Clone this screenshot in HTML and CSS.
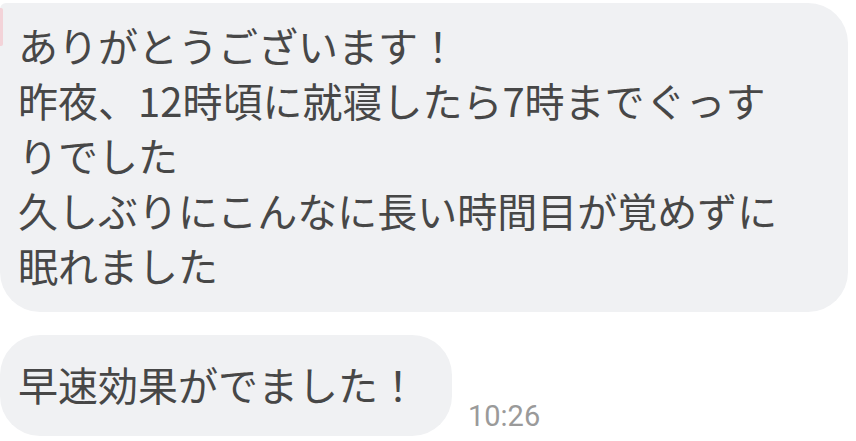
FILE: index.html
```html
<!DOCTYPE html>
<html lang="ja">
<head>
<meta charset="utf-8">
<link rel="stylesheet" href="styles.css">
</head>
<body>
<div class="chat">
  <span class="avatar-edge"></span>
  <div class="bubble bubble-first">ありがとうございます！<br>昨夜、12時頃に就寝したら7時までぐっすりでした<br>久しぶりにこんなに長い時間目が覚めずに眠れました</div>
  <div class="row">
    <div class="bubble bubble-short">早速効果がでました！</div>
    <span class="time">10:26</span>
  </div>
</div>
</body>
</html>
```
FILE: styles.css
```css
html, body {
  margin: 0;
  padding: 0;
  background: #ffffff;
}
.chat {
  position: relative;
  width: 856px;
  height: 441px;
  overflow: hidden;
  padding-top: 3px;
  box-sizing: border-box;
  display: flex;
  flex-direction: column;
  gap: 23px;
  font-family: "Noto Sans CJK JP", "Noto Sans", sans-serif;
}
.avatar-edge {
  position: absolute;
  left: 0;
  top: 8px;
  width: 3px;
  height: 38px;
  background: #f3d3d8;
  border-radius: 0 2px 2px 0;
}
.bubble {
  background: #f0f1f3;
  color: #474747;
  font-size: 40px;
  line-height: 55px;
  box-sizing: border-box;
  padding: 15px 18px 18px 18px;
  border-radius: 40px;
}
.bubble-first {
  width: 848px;
  height: 309px;
  padding-right: 45px;
  border-top-left-radius: 6px;
}
.row {
  display: flex;
  align-items: flex-end;
}
.bubble-short {
  width: 452px;
  height: 101px;
  padding: 22px 18px;
  white-space: nowrap;
}
.time {
  font-family: Roboto, "Liberation Sans", sans-serif;
  font-size: 29px;
  color: #9a9a9a;
  margin-left: 16px;
  padding-bottom: 3px;
}
```
